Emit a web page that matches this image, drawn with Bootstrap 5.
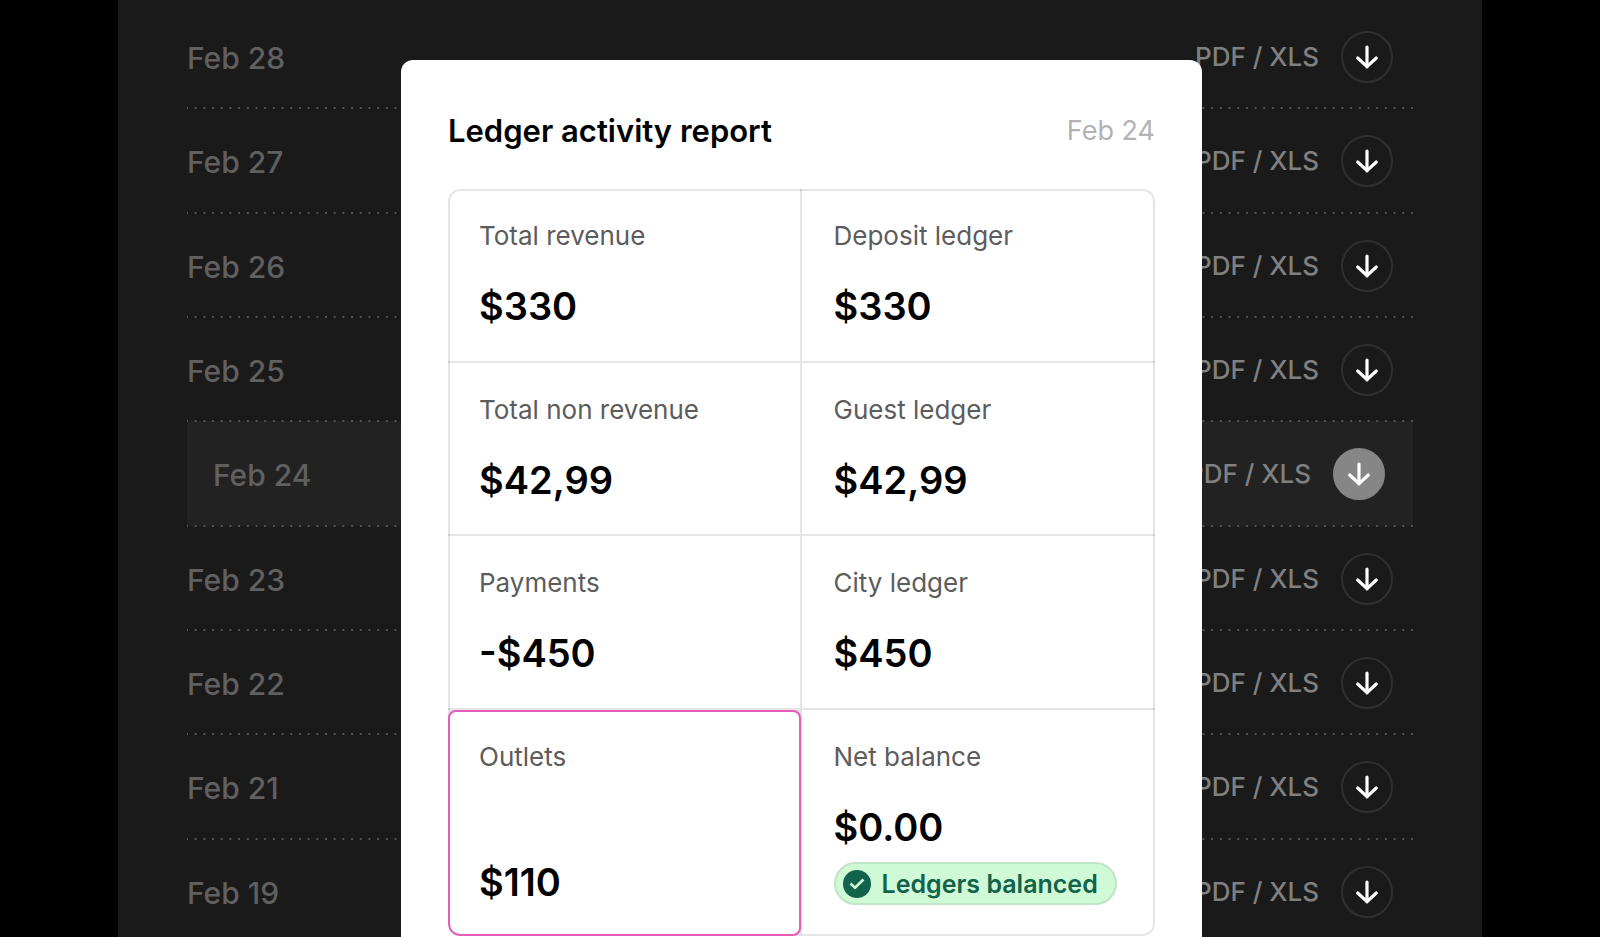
<!DOCTYPE html>
<html lang="en">
<head>
<meta charset="utf-8">
<meta name="viewport" content="width=device-width, initial-scale=1">
<title>Ledger activity report</title>
<link href="https://cdn.jsdelivr.net/npm/bootstrap@5.3.0/dist/css/bootstrap.min.css" rel="stylesheet">
<style>
  body { background: #000; font-family: Inter, "Liberation Sans", sans-serif; line-height: 32px; }
  .stage { height: 100vh; }
  .panel { max-width: 1364px; min-height: 100%; padding: 4px 69px 0; background: #1a1a1a; }
  .days { display: grid; grid-auto-rows: 1fr; min-height: 939px; }
  .day { position: relative; padding: 2px 20px 0 0; color: #606060; font-size: 30px; font-weight: 500; }
  /* dotted rule, a whole number of dots across the row */
  .day::after {
    content: ""; position: absolute; z-index: 1; inset: auto 0 -1px; height: 2px;
    background: linear-gradient(90deg, #545454 1px, transparent 1px calc(100% - 1px), #545454 calc(100% - 1px)) 0 0 / calc(100% / 141) 2px;
  }
  .day.is-active { padding: 2px 28px 0 26px; background: #222; }
  .day-name { padding-top: 2px; }
  .day-tools { gap: 22px; }
  .formats { color: #808080; font-size: 26px; }
  .btn-get { width: 52px; height: 52px; border: 2px solid #303030; }
  .btn-get:hover { border-color: #868686; background: #868686; }
  .is-active .btn-get { border-color: #868686; background: #868686; }
  .overlay { padding: 60px 0 0 3px; }
  .report { width: 801px; min-height: 900px; padding: 47px; border-radius: 12px; background: #fff; }
  .report-head { height: 48px; margin-bottom: 34px; }
  .report-title { font-size: 31px; }
  .report-date { color: #b3b3b3; font-size: 27px; }
  .figures { position: relative; display: grid; grid-template-columns: 1fr 1fr; grid-template-rows: repeat(3, 1fr) auto; min-height: 747px; border-radius: 12px; overflow: hidden; }
  .figures::after { content: ""; position: absolute; inset: 0; border: 2px solid rgba(0,0,0,.1); border-radius: 12px; pointer-events: none; }
  .figure-cell { padding: 31px 32px 20px; border-bottom: 2px solid rgba(0,0,0,.1); }
  .figure-cell.on-start { padding-left: 31px; border-right: 2px solid rgba(0,0,0,.1); }
  .figure-cell.on-last { height: 226px; border-bottom: 0; }
  .figure-cell.is-picked { padding: 0; border: 0; background: #e0e0e0; z-index: 1; }
  .picked-box { width: calc(100% - 1px); padding: 29px 29px 32px; border: 2px solid #e65cb8; border-radius: 8px 8px 8px 12px; background: #fff; }
  .figure-name { color: #5c5c5c; font-size: 26px; }
  .figure-value { font-size: 38px; line-height: 40px; margin-top: 34px; }
  .state { height: 43px; margin-top: 15px; padding: 0 17px 0 7px; gap: 11px; border: 2px solid #bfe6c5; border-radius: 22px; background: #d0f9d6; color: #11634b; font-size: 25px; }
</style>
</head>
<body>
<div class="stage position-relative overflow-hidden">
  <main class="panel mx-auto">
    <ul class="days list-unstyled mb-0" id="days"></ul>
  </main>
  <div class="overlay position-absolute top-0 start-0 w-100 d-flex justify-content-center z-3">
    <section class="report text-black" role="dialog" aria-labelledby="reportTitle">
      <header class="report-head d-flex align-items-center justify-content-between">
        <h1 class="report-title fw-semibold mb-0" id="reportTitle">Ledger activity report</h1>
        <span class="report-date">Feb 24</span>
      </header>
      <div class="figures">
        <div class="figure-cell on-start"><div class="figure-name">Total revenue</div><div class="figure-value fw-semibold">$330</div></div>
        <div class="figure-cell"><div class="figure-name">Deposit ledger</div><div class="figure-value fw-semibold">$330</div></div>
        <div class="figure-cell on-start"><div class="figure-name">Total non revenue</div><div class="figure-value fw-semibold">$42,99</div></div>
        <div class="figure-cell"><div class="figure-name">Guest ledger</div><div class="figure-value fw-semibold">$42,99</div></div>
        <div class="figure-cell on-start"><div class="figure-name">Payments</div><div class="figure-value fw-semibold">-$450</div></div>
        <div class="figure-cell"><div class="figure-name">City ledger</div><div class="figure-value fw-semibold">$450</div></div>
        <div class="figure-cell on-last is-picked d-flex">
          <div class="picked-box d-flex flex-column justify-content-between">
            <div class="figure-name">Outlets</div><div class="figure-value fw-semibold">$110</div>
          </div>
        </div>
        <div class="figure-cell on-last">
          <div class="figure-name">Net balance</div>
          <div class="figure-value fw-semibold">$0.00</div>
          <div class="state d-inline-flex align-items-center fw-semibold">
            <svg width="28" height="28" viewBox="0 0 28 28" aria-hidden="true"><circle cx="14" cy="14" r="14" fill="#11634b"/><path d="M7.500 13.500l4.500 4.300 8.500-8.300" fill="none" stroke="#d0f9d6" stroke-width="2.600"/></svg>
            <span>Ledgers balanced</span>
          </div>
        </div>
      </div>
    </section>
  </div>
</div>
<script src="https://cdn.jsdelivr.net/npm/bootstrap@5.3.0/dist/js/bootstrap.bundle.min.js"></script>
<script>
  const days = ["Feb 28", "Feb 27", "Feb 26", "Feb 25", "Feb 24", "Feb 23", "Feb 22", "Feb 21", "Feb 19"];
  document.getElementById("days").innerHTML = days.map(day => `
    <li class="day d-flex align-items-center justify-content-between${day === "Feb 24" ? " is-active" : ""}">
      <span class="day-name">${day}</span>
      <span class="day-tools d-flex align-items-center">
        <span class="formats">PDF / XLS</span>
        <button type="button" class="btn btn-get rounded-circle p-0 d-flex align-items-center justify-content-center" aria-label="Download ${day}">
          <svg width="24" height="24" viewBox="0 0 24 24" fill="none" stroke="#fff" stroke-width="3.200" stroke-linecap="round" stroke-linejoin="round" aria-hidden="true"><path d="M12 2v20M2.700 13L12 21.700l9.300-8.700"/><path d="M9.500 19.500h5L12 21.500z" fill="#fff" stroke="none"/></svg>
        </button>
      </span>
    </li>`).join("");
</script>
</body>
</html>
